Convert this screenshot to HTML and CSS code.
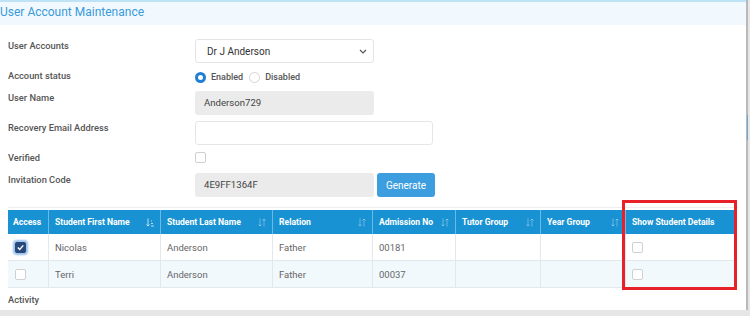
FILE: index.html
```html
<!DOCTYPE html>
<html lang="en">
<head>
  <meta charset="UTF-8">
  <title>User Account Maintenance</title>
  <link rel="stylesheet" href="styles.css">
</head>
<body>
  <div class="panel">
    <div class="panel-heading">User Account Maintenance</div>
    <div class="panel-body">
      <div class="form-row">
        <label class="form-label">User Accounts</label>
        <div class="select">
          <span>Dr J Anderson</span>
          <svg class="chevron" width="8" height="5" viewBox="0 0 8 5"><path d="M1 1 L4 4 L7 1" fill="none" stroke="#555" stroke-width="1.2"/></svg>
        </div>
      </div>
      <div class="form-row row-small">
        <label class="form-label">Account status</label>
        <div class="radios">
          <span class="radio checked"></span><span class="radio-text">Enabled</span>
          <span class="radio"></span><span class="radio-text">Disabled</span>
        </div>
      </div>
      <div class="form-row">
        <label class="form-label">User Name</label>
        <div class="input readonly">Anderson729</div>
      </div>
      <div class="form-row">
        <label class="form-label">Recovery Email Address</label>
        <div class="input email"></div>
      </div>
      <div class="form-row row-small">
        <label class="form-label">Verified</label>
        <span class="checkbox"></span>
      </div>
      <div class="form-row">
        <label class="form-label">Invitation Code</label>
        <div class="input readonly">4E9FF1364F</div>
        <button class="btn">Generate</button>
      </div>

      <div class="table-wrap">
        <table class="students">
          <thead>
            <tr>
              <th class="c-access">Access</th>
              <th class="c-name">Student First Name <svg class="sort active" width="8" height="9" viewBox="0 0 8 9"><path d="M2 0.5 V8 M0.5 6.5 L2 8 L3.5 6.5" fill="none" stroke="currentColor" stroke-width="1"/><path d="M5 3 H6 M5 5.5 H7 M5 8 H8" stroke="currentColor" stroke-width="1"/></svg></th>
              <th class="c-name">Student Last Name <svg class="sort" width="8" height="9" viewBox="0 0 8 9"><path d="M2 0.5 V8 M0.5 6.5 L2 8 L3.5 6.5 M6 8.5 V1 M4.5 2.5 L6 1 L7.5 2.5" fill="none" stroke="currentColor" stroke-width="1"/></svg></th>
              <th class="c-rel">Relation <svg class="sort" width="8" height="9" viewBox="0 0 8 9"><path d="M2 0.5 V8 M0.5 6.5 L2 8 L3.5 6.5 M6 8.5 V1 M4.5 2.5 L6 1 L7.5 2.5" fill="none" stroke="currentColor" stroke-width="1"/></svg></th>
              <th class="c-adm">Admission No <svg class="sort" width="8" height="9" viewBox="0 0 8 9"><path d="M2 0.5 V8 M0.5 6.5 L2 8 L3.5 6.5 M6 8.5 V1 M4.5 2.5 L6 1 L7.5 2.5" fill="none" stroke="currentColor" stroke-width="1"/></svg></th>
              <th class="c-grp">Tutor Group <svg class="sort" width="8" height="9" viewBox="0 0 8 9"><path d="M2 0.5 V8 M0.5 6.5 L2 8 L3.5 6.5 M6 8.5 V1 M4.5 2.5 L6 1 L7.5 2.5" fill="none" stroke="currentColor" stroke-width="1"/></svg></th>
              <th class="c-grp">Year Group <svg class="sort" width="8" height="9" viewBox="0 0 8 9"><path d="M2 0.5 V8 M0.5 6.5 L2 8 L3.5 6.5 M6 8.5 V1 M4.5 2.5 L6 1 L7.5 2.5" fill="none" stroke="currentColor" stroke-width="1"/></svg></th>
              <th class="c-show">Show Student Details</th>
            </tr>
          </thead>
          <tbody>
            <tr>
              <td><span class="checkbox checked"><svg width="9" height="9" viewBox="0 0 9 9"><path d="M1.8 4.6 L3.7 6.5 L7.3 2.4" fill="none" stroke="#fff" stroke-width="1.4"/></svg></span></td>
              <td>Nicolas</td>
              <td>Anderson</td>
              <td>Father</td>
              <td>00181</td>
              <td></td>
              <td></td>
              <td><span class="checkbox"></span></td>
            </tr>
            <tr class="alt">
              <td><span class="checkbox"></span></td>
              <td>Terri</td>
              <td>Anderson</td>
              <td>Father</td>
              <td>00037</td>
              <td></td>
              <td></td>
              <td><span class="checkbox"></span></td>
            </tr>
          </tbody>
        </table>
        <div class="highlight"></div>
      </div>

      <div class="section-label">Activity</div>
    </div>
  </div>
  <div class="scroll-thumb"></div>
</body>
</html>
```

FILE: styles.css
```css
body {
  margin: 0;
  font-family: Roboto, "Liberation Sans", sans-serif;
  background-color: #e6e6e6;
  width: 750px;
  height: 316px;
  overflow: hidden;
  position: relative;
}
.panel {
  width: 746px;
  height: 310px;
  background-color: #ffffff;
  border-right: 2px solid #b9b9b9;
  overflow: hidden;
}
.panel-heading {
  height: 23px;
  background-color: #f1f9fe;
  border-top: 2px solid #bfe3f6;
  color: #3a9ad9;
  font-size: 12px;
  line-height: 21px;
}
.panel-body {
  padding: 14px 8px 0 8px;
  position: relative;
}
.form-row {
  display: flex;
  align-items: flex-start;
  min-height: 24px;
  margin-bottom: 6px;
}
.row-small {
  min-height: 16px;
}
.form-label {
  width: 187px;
  flex: none;
  font-size: 9.3px;
  font-weight: 500;
  color: #555;
  line-height: 12px;
  padding-top: 1px;
}
.select {
  height: 22px;
  border: 1px solid #e4e4e4;
  border-radius: 3px;
  display: flex;
  align-items: center;
  justify-content: space-between;
  padding: 0 6px 0 11px;
  width: 160px;
  font-size: 10px;
  color: #333;
}
.radios {
  display: flex;
  align-items: center;
  height: 14px;
  margin-top: 1px;
}
.radio {
  width: 11px;
  height: 11px;
  border: 1px solid #d4d4d4;
  border-radius: 50%;
  box-sizing: border-box;
}
.radio.checked {
  border: 3px solid #1e7fd4;
}
.radio-text {
  font-size: 9px;
  color: #555;
  font-weight: 500;
  margin: 0 6px 0 5px;
}
.input {
  height: 24px;
  width: 179px;
  border-radius: 3px;
  box-sizing: border-box;
  font-size: 9.6px;
  color: #444;
  line-height: 24px;
  padding-left: 9px;
}
.input.readonly {
  background-color: #ebebeb;
}
.input.email {
  width: 238px;
  border: 1px solid #e6e6e6;
}
.checkbox {
  display: inline-flex;
  align-items: center;
  justify-content: center;
  width: 11px;
  height: 11px;
  border: 1px solid #d0d0d0;
  border-radius: 2px;
  box-sizing: border-box;
  background-color: #fff;
  margin-top: 1px;
}
.checkbox.checked {
  background-color: #27497c;
  border-color: #27497c;
  box-shadow: 0 0 2px 2px rgba(70, 140, 220, 0.55);
}
.btn {
  height: 24px;
  width: 58px;
  margin-left: 3px;
  padding: 0;
  background-color: #3d9edf;
  border: none;
  border-radius: 3px;
  color: #fff;
  font-family: inherit;
  font-size: 10px;
}
.table-wrap {
  border-top: 1px solid #eeeeee;
  padding-top: 2px;
  margin-top: 10px;
  position: relative;
}
.students {
  width: 725px;
  border-collapse: collapse;
  table-layout: fixed;
}
.students th {
  background-color: #1992d3;
  color: #fff;
  font-size: 8.6px;
  font-weight: bold;
  text-align: left;
  height: 24px;
  padding: 0 6px;
  border-left: 1px solid #6ab9e6;
  position: relative;
  white-space: nowrap;
}
.students th:first-child {
  border-left: none;
  padding: 0 5px;
}
.students .c-access { width: 30px; }
.students .c-name { width: 99px; }
.students .c-rel { width: 87px; }
.students .c-adm { width: 70px; }
.students .c-grp { width: 72px; }
.students .c-show { width: 96px; }
.sort {
  position: absolute;
  right: 6px;
  top: 8px;
  color: rgba(255, 255, 255, 0.35);
}
.sort.active {
  color: rgba(255, 255, 255, 0.7);
}
.students td {
  height: 26px;
  padding: 0 6px;
  font-size: 9.5px;
  color: #666;
  border-left: 1px solid #e3e8ec;
  border-bottom: 1px solid #e3e8ec;
}
.students td:first-child {
  border-left: none;
  padding: 0 7px;
}
.students tr.alt td {
  background-color: #f2f9fd;
}
.students td .checkbox {
  display: flex;
}
.highlight {
  position: absolute;
  left: 614px;
  top: -8px;
  width: 115px;
  height: 90px;
  border: 3px solid #e8202a;
  box-sizing: border-box;
}
.section-label {
  font-size: 9.3px;
  font-weight: 500;
  color: #555;
  margin-top: 6px;
}
.scroll-thumb {
  position: absolute;
  left: 747px;
  top: 115px;
  width: 1px;
  height: 25px;
  background-color: #6fa6cf;
}
```
